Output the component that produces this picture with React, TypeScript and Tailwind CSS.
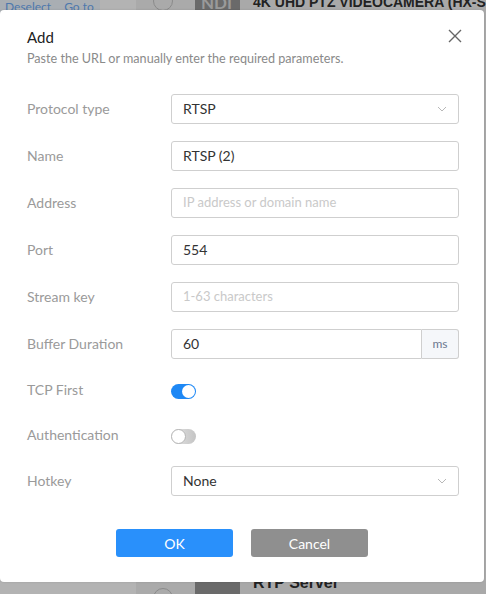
import React from "react";

function Chevron() {
  return (
    <svg width="10" height="6" viewBox="0 0 10 6" className="shrink-0">
      <path d="M1 1l4 4 4-4" fill="none" stroke="#b8b8b8" strokeWidth="1" />
    </svg>
  );
}

function Row({ label, children, h = "h-[47px]" }: { label: string; children: React.ReactNode; h?: string }) {
  return (
    <div className={`flex items-center ${h}`}>
      <div className="w-[144px] shrink-0 text-[14px] text-[#9a9a9a] leading-none -mt-[12px]">{label}</div>
      <div className="flex-1 -mt-[12px]">{children}</div>
    </div>
  );
}

function Input({ value, placeholder }: { value?: string; placeholder?: string }) {
  return (
    <div className="h-[30px] border border-[#cfcfcf] rounded-[3px] flex items-center px-[11px]">
      {value ? (
        <span className="text-[14px] text-[#333]">{value}</span>
      ) : (
        <span className="text-[13px] text-[#c9c9c9]">{placeholder}</span>
      )}
    </div>
  );
}

function Select({ value }: { value: string }) {
  return (
    <div className="h-[30px] border border-[#cfcfcf] rounded-[3px] flex items-center justify-between pl-[11px] pr-[11px]">
      <span className="text-[14px] text-[#333]">{value}</span>
      <Chevron />
    </div>
  );
}

export default function App() {
  return (
    <div
      className="relative w-[486px] h-[594px] overflow-hidden bg-[#a9a9a9]"
      style={{ fontFamily: "Lato, 'Open Sans', sans-serif" }}
    >
      {/* background list */}
      <div className="flex flex-col h-full justify-between">
        <div className="flex h-[22px] items-start">
          <div className="w-[100px] shrink-0 h-full bg-[#a9aeb3] flex gap-[13px] pl-[5px] text-[12px] text-[#4d78ad] leading-[14px] whitespace-nowrap">
            <span>Deselect</span>
            <span>Go to</span>
          </div>
          <div className="w-[36px] shrink-0 h-full bg-[#b3b3b3]" />
          <div className="w-[59px] shrink-0 h-full bg-[#aaaaaa] flex justify-center">
            <div className="w-[20px] h-[20px] rounded-full border border-[#8a8a8a] -mt-[9px] ml-[-6px]" />
          </div>
          <div className="w-[45px] shrink-0 h-full bg-[#6a6a6a] text-[#9a9a9a] font-bold text-[17px] leading-[18px] pl-[6px] -mt-[6px]">NDI</div>
          <div className="flex-1 min-w-0 overflow-hidden pl-[13px] text-[14px] font-bold text-[#222] leading-[18px] -mt-[7px] whitespace-nowrap" style={{ fontFamily: "'Liberation Sans', Arial, sans-serif" }}>
            4K UHD PTZ VIDEOCAMERA (HX-S
          </div>
        </div>
        <div className="flex h-[22px] items-end">
          <div className="w-[136px] shrink-0 h-full bg-[#b3b3b3]" />
          <div className="w-[59px] shrink-0 h-full bg-[#aaaaaa] flex justify-center">
            <div className="w-[20px] h-[20px] rounded-full border border-[#8a8a8a] mt-[16px] ml-[-6px]" />
          </div>
          <div className="w-[45px] shrink-0 h-full bg-[#6a6a6a]" />
          <div className="flex-1 min-w-0 overflow-hidden h-full pl-[13px] text-[16px] font-bold text-[#222] leading-[18px] pt-[2px] whitespace-nowrap" style={{ fontFamily: "'Liberation Sans', Arial, sans-serif" }}>
            RTP Server
          </div>
        </div>
      </div>

      {/* dialog */}
      <div className="absolute left-0 top-[10px] w-[484px] h-[572px] bg-white rounded-[4px] shadow-[0_0_2px_rgba(0,0,0,0.15)]">
        <div className="flex justify-between pl-[27px] pr-[22px] pt-[18px]">
          <div>
            <div className="text-[15px] text-[#222] leading-[18px]">Add</div>
            <div className="text-[12.6px] text-[#8a8a8a] mt-[5px] leading-[15px]">
              Paste the URL or manually enter the required parameters.
            </div>
          </div>
          <svg width="14" height="14" viewBox="0 0 14 14" className="mt-[1px]">
            <path d="M1 1L13 13M13 1L1 13" stroke="#666" strokeWidth="1.4" />
          </svg>
        </div>

        <div className="pl-[27px] pr-[25px] mt-[25px] flex flex-col">
          <Row label="Protocol type"><Select value="RTSP" /></Row>
          <Row label="Name"><Input value="RTSP (2)" /></Row>
          <Row label="Address"><Input placeholder="IP address or domain name" /></Row>
          <Row label="Port"><Input value="554" /></Row>
          <Row label="Stream key"><Input placeholder="1-63 characters" /></Row>
          <Row label="Buffer Duration">
            <div className="h-[30px] flex">
              <div className="flex-1 border border-[#cfcfcf] rounded-l-[3px] flex items-center px-[11px]">
                <span className="text-[14px] text-[#333]">60</span>
              </div>
              <div className="w-[37px] border border-l-0 border-[#cfcfcf] rounded-r-[3px] bg-[#f5f7fa] flex items-center justify-center text-[12px] text-[#6b7890]">
                ms
              </div>
            </div>
          </Row>
          <Row label="TCP First" h="h-[45px]">
            <div className="w-[25px] h-[15px] rounded-full bg-[#1e88f5] relative mt-[4px]">
              <div className="absolute right-[1px] top-[1px] w-[13px] h-[13px] rounded-full bg-white" />
            </div>
          </Row>
          <Row label="Authentication" h="h-[45px]">
            <div className="w-[25px] h-[15px] rounded-full bg-gradient-to-r from-[#e6e6e6] to-[#c4c4c4] relative mt-[4px]">
              <div className="absolute left-[0px] top-[0px] w-[15px] h-[15px] rounded-full bg-white border border-[#b5b5b5]" />
            </div>
          </Row>
          <Row label="Hotkey"><Select value="None" /></Row>
        </div>

        <div className="flex justify-center gap-[18px] mt-[19px]">
          <button className="w-[117px] h-[28px] rounded-[3px] bg-[#2990fb] text-white text-[14px]">OK</button>
          <button className="w-[117px] h-[28px] rounded-[3px] bg-[#8f8f8f] text-white text-[14px]">Cancel</button>
        </div>
      </div>
    </div>
  );
}
